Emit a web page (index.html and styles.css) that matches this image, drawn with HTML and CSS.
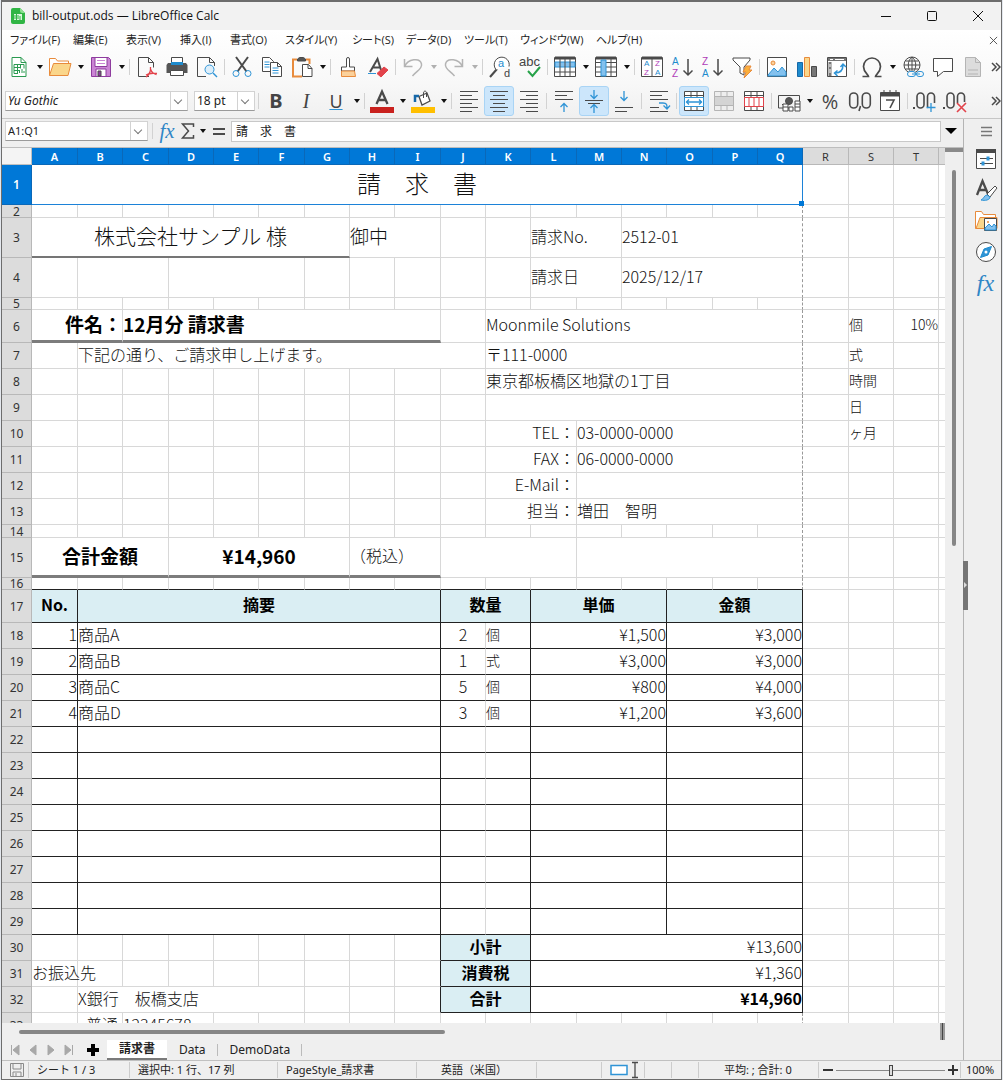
FILE: index.html
```html
<!DOCTYPE html>
<html lang="ja">
<head>
<meta charset="utf-8">
<title>bill-output.ods — LibreOffice Calc</title>
<meta name="viewport" content="width=device-width, initial-scale=1">
<link rel="stylesheet" href="styles.css">
</head>
<body>
<div class="window">
<header class="titlebar">
  <svg class="app-icon" viewBox="0 0 16 18"><path d="M3 1h7l5 5v9a2 2 0 0 1-2 2H3a2 2 0 0 1-2-2V3a2 2 0 0 1 2-2z" fill="#30b544"/><path d="M10 1l5 5h-3a2 2 0 0 1-2-2z" fill="#8be08f"/><path d="M4 7h8v6H4z" fill="#d9f5dc"/><path d="M4 9h5M4 11h5M6.500 7v6M10 9v4" stroke="#30b544"/></svg>
  <h1 class="title">bill-output.ods — LibreOffice Calc</h1>
  <div class="win-buttons">
    <button aria-label="最小化"><svg viewBox="0 0 12 12"><path d="M1 6.500h10"/></svg></button>
    <button aria-label="最大化"><svg viewBox="0 0 12 12"><rect x="1.500" y="1.500" width="9" height="9" rx="1"/></svg></button>
    <button aria-label="閉じる"><svg viewBox="0 0 12 12"><path d="M1 1l10 10M11 1L1 11"/></svg></button>
  </div>
</header>

<div class="chrome">
<nav class="menubar">
  <button>ファイル(F)</button><button>編集(E)</button><button>表示(V)</button><button>挿入(I)</button><button>書式(O)</button><button>スタイル(Y)</button><button>シート(S)</button><button>データ(D)</button><button>ツール(T)</button><button>ウィンドウ(W)</button><button>ヘルプ(H)</button>
  <button class="doc-close" aria-label="文書を閉じる"><svg viewBox="0 0 10 10"><path d="M1 1l8 8M9 1L1 9"/></svg></button>
</nav>

<div class="toolbar">
  <button class="tool" aria-label="新規"><svg viewBox="0 0 24 24"><path class="g" d="M5 2.500h9l5 5v14H5z" fill="#fff"/><path class="g" d="M14 2.500v5h5M7 9.500h10M7 12.500h6M7 15.500h6M7 18.500h4M7 9.500v9M10.500 9.500v9M13.500 9.500v4M17 9.500v4M12.500 18v-3M15 18v-4M17 18v-2"/></svg></button><button class="arrow" aria-label="新規メニュー"></button>
  <button class="tool" aria-label="開く"><svg viewBox="0 0 24 24"><path d="M1.500 20.500v-17h6l2 2.500h11v4" fill="#fff" stroke="#e88b3c"/><path d="M1.500 20.500l4-12h17.500l-3 12z" fill="#fad68b" stroke="#e88b3c"/></svg></button><button class="arrow" aria-label="開くメニュー"></button>
  <button class="tool" aria-label="保存"><svg viewBox="0 0 24 24"><path d="M2.500 2.500h17l2 2v17h-19z" fill="#ca84d4" stroke="#8e3c9e"/><path d="M6 2.500h12v9H6zM7 14h10v7.500H7z" fill="#fff" stroke="#8e3c9e"/><path d="M9 16h3v5H9z" fill="#8e3c9e"/><path d="M8 5.500h8M8 8.500h8" stroke="#ca84d4"/></svg></button><button class="arrow" aria-label="保存メニュー"></button>
  <span class="sep"></span>
  <button class="tool" aria-label="PDF"><svg viewBox="0 0 24 24"><path d="M14 21.500H3.500v-19h10l5 5v5M13.500 2.500v5h5"/><path d="M11 22c3-2 5-5 4.500-10M15.500 14c1 3 3 5 6 5.500M11 20c3-2 7-2 11-1.500" stroke="#e2434b" stroke-width="1.300"/></svg></button>
  <button class="tool" aria-label="印刷"><svg viewBox="0 0 24 24"><path d="M6.500 8V2.500h11V8" fill="#fff"/><path d="M3 8h18l1.500 2v8h-21v-8z" fill="#555" stroke="none"/><path d="M6 7h12v3H6z" fill="#1e8bcd" stroke="none"/><path d="M5.500 15.500h13v5h-13z" fill="#fff"/></svg></button>
  <button class="tool" aria-label="印刷プレビュー"><svg viewBox="0 0 24 24"><path d="M11 21.500H2.500v-19h12l5 5V11M14.500 2.500v5h5"/><circle cx="14.500" cy="14.500" r="4.500" fill="#dceefa" stroke="#2f94d6"/><path d="M18 18l4 4" stroke="#2f94d6" stroke-width="1.500"/></svg></button>
  <span class="sep"></span>
  <button class="tool" aria-label="切り取り"><svg viewBox="0 0 24 24"><path d="M6 2l10.500 14.500M18 2L7.500 16.500" stroke-width="2"/><circle cx="6" cy="18.500" r="3" stroke="#2f94d6"/><circle cx="18" cy="18.500" r="3" stroke="#2f94d6"/></svg></button>
  <button class="tool" aria-label="コピー"><svg viewBox="0 0 24 24"><path d="M2.500 2.500h7l4 4v10h-11z" fill="#fff"/><path d="M4.500 7h5M4.500 9.500h5M4.500 12h5" stroke="#2f94d6"/><path d="M10.500 7.500h7l4 4v10h-11z" fill="#fff"/><path d="M17.500 7.500v4h4"/><path d="M12.500 13h6M12.500 15.500h6M12.500 18h6" stroke="#2f94d6"/></svg></button>
  <button class="tool" aria-label="貼り付け"><svg viewBox="0 0 24 24"><path d="M7 4.500H3v17h9M16 4.500h3.500V9" stroke="#e88b3c" stroke-width="2"/><path d="M7.500 6V4l2-1.500h4L15.500 4v2z" fill="#555"/><path d="M12.500 9.500h6l3.500 4v8h-9.500z" fill="#fff"/><path d="M18 9.500v4h4"/></svg></button><button class="arrow" aria-label="貼り付けメニュー"></button>
  <span class="sep"></span>
  <button class="tool" aria-label="書式の複写"><svg viewBox="0 0 24 24"><path d="M10.500 12V4a1.500 1.500 0 0 1 3 0v8h5v4h-13v-4z" fill="#fff"/><path d="M5.500 16h13l1 5.500H5.500z" fill="#fbd19b" stroke="#e88b3c"/></svg></button>
  <button class="tool" aria-label="書式のクリア"><svg viewBox="0 0 24 24"><path d="M4 17L11.500 4 15 15M7 12.500h7" stroke-width="2"/><path d="M2 18.500h8" stroke="#2f94d6"/><path d="M18 12l4 3-7 7-4-3.500z" fill="#e2434b" stroke="#e2434b"/></svg></button>
  <span class="sep"></span>
  <button class="tool dim" aria-label="元に戻す"><svg viewBox="0 0 24 24"><path d="M3.500 4v7.500h8M3.500 11.500C7 4 19 2 20.500 9c1 5-5 7-9 12" stroke-width="1.500"/></svg></button><button class="arrow dim" aria-label="元に戻す履歴"></button>
  <button class="tool dim" aria-label="やり直し"><svg viewBox="0 0 24 24"><path d="M20.500 4v7.500h-8M20.500 11.500C17 4 5 2 3.500 9c-1 5 5 7 9 12" stroke-width="1.500"/></svg></button><button class="arrow dim" aria-label="やり直し履歴"></button>
  <span class="sep"></span>
  <button class="tool" aria-label="検索と置換"><svg viewBox="0 0 24 24"><path d="M9 14l-7 8" stroke-width="2"/><path d="M8 14.500a7.500 7.500 0 1 1 13-3" fill="#fff"/><text x="10" y="12" class="ic b" font-size="11">a</text><text x="16" y="22" class="ic" font-size="11">d</text></svg></button>
  <button class="tool" aria-label="スペルチェック"><svg viewBox="0 0 24 24"><text x="1" y="11" class="ic" font-size="13">abc</text><path d="M10 16l4.500 5L22 12" stroke="#27a34a" stroke-width="2"/></svg></button>
  <span class="sep"></span>
  <button class="tool" aria-label="行"><svg viewBox="0 0 24 24"><path d="M1.500 2.500h21v19h-21z" fill="#fff"/><path d="M2 7h20v5H2z" fill="#83c1ee" stroke="#2f94d6"/><path d="M2 3h20" stroke-width="3"/><path d="M2 17h20M7 3v18M12 3v18M17 3v18"/></svg></button><button class="arrow" aria-label="行メニュー"></button>
  <button class="tool" aria-label="列"><svg viewBox="0 0 24 24"><path d="M1.500 2.500h21v19h-21z" fill="#fff"/><path d="M2 3h20" stroke-width="3"/><path d="M2 7.500h20M2 12h20M2 17h20M17 3v18"/><path d="M7 5h5v16H7z" fill="#83c1ee" stroke="#2f94d6"/></svg></button><button class="arrow" aria-label="列メニュー"></button>
  <span class="sep"></span>
  <button class="tool" aria-label="並べ替え"><svg viewBox="0 0 24 24"><path d="M1.500 2.500h21v19h-21z" fill="#fff"/><path d="M2 3h20" stroke-width="3"/><path d="M12 3v18"/><text x="4" y="11" class="ic b" font-size="8">A</text><text x="4" y="20" class="ic p" font-size="8">Z</text><text x="15" y="11" class="ic p" font-size="8">Z</text><text x="15" y="20" class="ic b" font-size="8">A</text></svg></button>
  <button class="tool" aria-label="昇順"><svg viewBox="0 0 24 24"><text x="2" y="10" class="ic b" font-size="10">A</text><text x="2" y="22" class="ic p" font-size="10">Z</text><path d="M18 4v16M13.500 15.500L18 20l4.500-4.500" stroke-width="1.500"/></svg></button>
  <button class="tool" aria-label="降順"><svg viewBox="0 0 24 24"><text x="2" y="10" class="ic p" font-size="10">Z</text><text x="2" y="22" class="ic b" font-size="10">A</text><path d="M18 4v16M13.500 15.500L18 20l4.500-4.500" stroke-width="1.500"/></svg></button>
  <button class="tool" aria-label="オートフィルター"><svg viewBox="0 0 24 24"><path d="M3 3h17v2l-6 7v8l-4-2v-6L3 5z" fill="#fff"/><path d="M16 11h5l-2 4h3l-8 8 2-6h-3z" fill="#fbb03b" stroke="#e88b3c"/></svg></button>
  <span class="sep"></span>
  <button class="tool" aria-label="画像"><svg viewBox="0 0 24 24"><path d="M2.500 2.500h19v19h-19z" fill="#fff"/><path d="M3 20l6-7 4 4 4-5 4 5v4H3z" fill="#83c1ee" stroke="#2f94d6"/><circle cx="8" cy="8" r="2" fill="#fbd19b" stroke="#e88b3c"/></svg></button>
  <button class="tool" aria-label="グラフ"><svg viewBox="0 0 24 24"><path d="M2.500 7.500h5v14h-5z" fill="#1e8bcd" stroke="#1668a8"/><path d="M9.500 2.500h5v19h-5z" fill="#fad68b" stroke="#e88b3c"/><path d="M16.500 11.500h5v10h-5z" fill="#777"/></svg></button>
  <button class="tool" aria-label="ピボットテーブル"><svg viewBox="0 0 24 24"><path d="M2.500 2.500h19v19h-19z" fill="#fff"/><path d="M3 4.500h18" stroke-width="3" stroke="#777"/><path d="M5 7v14" stroke-width="3" stroke="#777"/><path d="M5 4.500h3M10 4.500h9M5 9v3M5 14v4" stroke="#fff"/><path d="M10 18c6 0 8-3 8-8M15.500 12l2.500-3 3 3M12.500 15.500L9.500 18l3 3" stroke="#2f94d6" stroke-width="1.500"/></svg></button>
  <span class="sep"></span>
  <button class="tool" aria-label="特殊文字"><svg viewBox="0 0 24 24"><path d="M2.500 21.500h6c0-2-5-4-5-10a8.500 8.500 0 0 1 17 0c0 6-5 8-5 10h6" stroke-width="1.700"/></svg></button><button class="arrow" aria-label="特殊文字メニュー"></button>
  <button class="tool" aria-label="ハイパーリンク"><svg viewBox="0 0 24 24"><circle cx="11" cy="10" r="8"/><path d="M3 10h16M4.500 6h13M4.500 14h13M11 2v14M11 2c-5 4-5 12 0 16M11 2c5 4 5 12 0 16"/><rect x="6.500" y="16.500" width="8" height="5" rx="2.500" fill="#f8f8f8" stroke="#2f94d6"/><rect x="15.500" y="16.500" width="7" height="5" rx="2.500" fill="#f8f8f8" stroke="#2f94d6"/><path d="M11 19h8" stroke="#2f94d6"/></svg></button>
  <button class="tool" aria-label="コメント"><svg viewBox="0 0 24 24"><path d="M2.500 3.500h19v13h-9l-6 5v-5h-4z" fill="#fff"/></svg></button>
  <button class="tool dim" aria-label="ヘッダーとフッター"><svg viewBox="0 0 24 24"><path d="M4.500 2.500h10l5 5v14h-15z" fill="#dcdcdc"/><path d="M14.500 2.500v5h5M7 15h10M7 19h10"/></svg></button>
  <button class="more" aria-label="その他"><svg viewBox="0 0 10 12"><path d="M1 2l4 4-4 4M5 2l4 4-4 4"/></svg></button>
</div>

<div class="toolbar format">
  <span class="combo font-combo"><select aria-label="フォント名"><option>Yu Gothic</option></select></span>
  <span class="combo size-combo"><select aria-label="フォントサイズ"><option>18 pt</option></select></span>
  <span class="sep"></span>
  <button class="tool bold">B</button><button class="tool ital">I</button><button class="tool under"><u>U</u></button><button class="arrow" aria-label="下線メニュー"></button>
  <span class="sep"></span>
  <button class="tool" aria-label="文字の色"><svg viewBox="0 0 24 24"><path d="M6.500 15L12 2.500 17.500 15M8.500 11h7" stroke-width="2.300"/><path d="M0 18h24v6H0z" fill="#c9211e" stroke="none"/></svg></button><button class="arrow" aria-label="文字の色メニュー"></button>
  <button class="tool" aria-label="背景色"><svg viewBox="0 0 24 24"><path d="M8 7.500l8-3.500 3 8-8 4z" fill="#fff" stroke-width="1.300"/><path d="M12.500 9V4c0-2.500 3-2.500 3 0v4"/><path d="M4 13V7h4" stroke="#1668a8" stroke-width="2.500"/><path d="M0 18h24v6H0z" fill="#ffbf00" stroke="none"/></svg></button><button class="arrow" aria-label="背景色メニュー"></button>
  <span class="sep"></span>
  <button class="tool" aria-label="左揃え"><svg viewBox="0 0 24 24"><path class="w" d="M3 2.500h18M3 6.500h12M3 10.500h18M3 14.500h12M3 18.500h18M3 22.500h12"/></svg></button>
  <button class="tool on" aria-label="中央揃え"><svg viewBox="0 0 24 24"><path class="w" d="M3 2.500h18M6 6.500h12M3 10.500h18M6 14.500h12M3 18.500h18M6 22.500h12"/></svg></button>
  <button class="tool" aria-label="右揃え"><svg viewBox="0 0 24 24"><path class="w" d="M3 2.500h18M9 6.500h12M3 10.500h18M9 14.500h12M3 18.500h18M9 22.500h12"/></svg></button>
  <span class="sep"></span>
  <button class="tool" aria-label="上揃え"><svg viewBox="0 0 24 24"><path class="w" d="M3 2.500h18M3 6.500h12M3 10.500h18"/><path class="a" d="M12 23v-8M8.500 18l3.500-3.500 3.500 3.500"/></svg></button>
  <button class="tool on" aria-label="上下中央揃え"><svg viewBox="0 0 24 24"><path class="w" d="M3 11.500h18M6 14.500h12"/><path class="a" d="M12 1v8M8.500 6L12 9.500 15.500 6M12 24v-8M8.500 19l3.500-3.500 3.500 3.500"/></svg></button>
  <button class="tool" aria-label="下揃え"><svg viewBox="0 0 24 24"><path class="w" d="M3 18.500h18M3 22.500h12"/><path class="a" d="M12 2v9M8.500 8l3.500 3.500L15.500 8"/></svg></button>
  <span class="sep"></span>
  <button class="tool" aria-label="折り返し"><svg viewBox="0 0 24 24"><path class="w" d="M3 2.500h18M3 6.500h12M3 10.500h18M3 18.500h9M3 22.500h18"/><path class="a" d="M12 14h4c4 0 4 2 4 5M16.500 16.500l3.500 3.500 3-3.500"/></svg></button>
  <span class="sep"></span>
  <button class="tool on" aria-label="セルの結合"><svg viewBox="0 0 24 24"><path d="M2.500 2.500h19v19h-19z" fill="#fff"/><path d="M2.500 6.500h19M9 2v20M15 2v20"/><path d="M2.500 8.500h19v9h-19z" fill="#fff" stroke="#2f94d6"/><path class="a" d="M4 13h16M7 10.500L4.500 13 7 15.500M17 10.500l2.500 2.500-2.500 2.500"/></svg></button>
  <button class="tool dim" aria-label="中央に結合"><svg viewBox="0 0 24 24"><path d="M2.500 2.500h19v19h-19z" fill="#eee"/><path d="M2.500 7.500h19v9h-19zM9 2v6M15 2v6M9 17v5M15 17v5" fill="#d4d4d4"/></svg></button>
  <button class="tool" aria-label="結合の解除"><svg viewBox="0 0 24 24"><path d="M2.500 2.500h19v19h-19z" fill="#fff"/><path d="M2.500 6.500h19M9 2v20M15 2v20"/><path d="M2.500 8.500h19v9h-19zM7 9v9M12 9v9M17 9v9" fill="#fff" stroke="#e2434b"/></svg></button>
  <span class="sep"></span>
  <button class="tool" aria-label="通貨"><svg viewBox="0 0 24 24"><path d="M12 19H1.500V6.500h21V13M5 15.500h4"/><circle cx="12" cy="12" r="3.500" fill="#555"/><path d="M6 15h5v7H6zM12 18h4v4h-4zM18 12h5v10h-5z" fill="#fff"/><path d="M6 18h5M18 15h5M18 18h5"/></svg></button><button class="arrow" aria-label="通貨メニュー"></button>
  <button class="tool num">%</button>
  <button class="tool num" aria-label="数値"><svg viewBox="0 0 24 24"><rect x="1.700" y="4" width="8" height="15" rx="4" stroke-width="1.600"/><rect x="14.300" y="4" width="8" height="15" rx="4" stroke-width="1.600"/><path d="M12.500 17l-1.500 5" stroke-width="1.600"/></svg></button>
  <button class="tool" aria-label="日付"><svg viewBox="0 0 24 24"><path d="M2.500 3.500h19v18h-19z" fill="#fff"/><path d="M2.500 5.500h19" stroke-width="4"/><path d="M6 1v4M12 1v4M18 1v4"/><path d="M8 11h8l-4 8" stroke-width="1.600"/></svg></button>
  <span class="sep"></span>
  <button class="tool" aria-label="小数点以下の桁数を増やす"><svg viewBox="0 0 24 24"><rect x="4" y="4" width="7" height="15" rx="3.500" stroke-width="1.600"/><path d="M15 19a6 6 0 0 1-.5-3V7.500a3.500 3.500 0 0 1 7 0V14" stroke-width="1.600"/><path d="M1 18v2" stroke-width="2"/><path class="a" d="M18 14v9M13.500 18.500h9"/></svg></button>
  <button class="tool" aria-label="小数点以下の桁数を減らす"><svg viewBox="0 0 24 24"><rect x="4" y="4" width="7" height="15" rx="3.500" stroke-width="1.600"/><path d="M14.500 14V7.500a3.500 3.500 0 0 1 7 0V13" stroke-width="1.600"/><path d="M1 18v2" stroke-width="2"/><path d="M14 14l9 9M23 14l-9 9" stroke="#e2434b" stroke-width="1.600"/></svg></button>
  <button class="more" aria-label="その他"><svg viewBox="0 0 10 12"><path d="M1 2l4 4-4 4M5 2l4 4-4 4"/></svg></button>
</div>
</div>

<div class="main">
<main class="work">
  <div class="formula-bar">
    <span class="combo name-box"><input aria-label="名前ボックス" value="A1:Q1"></span>
    <span class="sep"></span>
    <button class="fx" aria-label="関数ウィザード"><i>fx</i></button>
    <button class="sigma" aria-label="合計"><svg viewBox="0 0 14 18"><path d="M12.500 5V2h-11l6 7-6 7h11v-3" stroke-width="1.500"/></svg></button>
    <button class="arrow" aria-label="合計メニュー"></button>
    <button class="equal" aria-label="数式"><svg viewBox="0 0 14 12"><path d="M1 4h12M1 9h12" stroke-width="2"/></svg></button>
    <input class="formula" aria-label="数式入力" value="請　求　書">
    <button class="expand" aria-label="展開"></button>
  </div>
  <div class="sheet-area">
  <div class="viewport">
  <table class="sheet">
    <colgroup><col class="rh"><col class="w"><col class="n"><col class="w"><col class="n"><col class="n"><col class="w"><col class="n"><col class="n"><col class="w"><col class="n"><col class="n"><col class="w"><col class="n"><col class="n"><col class="w"><col class="n"><col class="n"><col class="w"><col class="n"><col class="n"><col></colgroup>
    <thead><tr class="cols"><td class="corner"><th class="s">A<th class="s">B<th class="s">C<th class="s">D<th class="s">E<th class="s">F<th class="s">G<th class="s">H<th class="s">I<th class="s">J<th class="s">K<th class="s">L<th class="s">M<th class="s">N<th class="s">O<th class="s">P<th class="s">Q<th>R<th>S<th>T<th></tr></thead>
    <tbody>
    <tr class="tall"><th class="s">1<td class="title-cell" colspan="17">請　求　書<span class="handle"></span><td><td><td><td></tr>
    <tr class="short"><th>2<td><td><td><td><td><td><td><td><td><td><td><td><td><td><td><td><td class="pg"><td><td><td><td></tr>
    <tr class="tall"><th>3<td class="client" colspan="7">株式会社サンプル 様<td class="big" colspan="2">御中<td><td><td colspan="2">請求No.<td class="pg" colspan="4">2512-01<td><td><td><td></tr>
    <tr class="tall"><th>4<td><td colspan="2"><td colspan="3"><td><td><td><td><td><td colspan="2">請求日<td class="pg" colspan="4">2025/12/17<td><td><td><td></tr>
    <tr class="tiny"><th>5<td><td><td><td><td><td><td><td><td><td><td><td><td><td><td><td><td class="pg"><td><td><td><td></tr>
    <tr class="mid"><th>6<td class="big b r thick" colspan="2">件名：<td class="big b thick" colspan="7">12月分 請求書<td><td class="pg" colspan="7">Moonmile Solutions<td><td class="unit">個<td class="rate">10%<td></tr>
    <tr><th>7<td><td colspan="9">下記の通り、ご請求申し上げます。<td class="pg" colspan="7">〒111-0000<td><td class="unit">式<td><td></tr>
    <tr><th>8<td><td><td><td><td><td><td><td><td><td><td class="pg" colspan="7">東京都板橋区地獄の1丁目<td><td class="unit">時間<td><td></tr>
    <tr><th>9<td><td><td><td><td><td><td><td><td><td><td class="pg" colspan="7"><td><td class="unit">日<td><td></tr>
    <tr><th>10<td><td><td><td><td><td><td><td><td><td><td class="r" colspan="2">TEL：<td class="pg" colspan="5">03-0000-0000<td><td class="unit">ヶ月<td><td></tr>
    <tr><th>11<td><td><td><td><td><td><td><td><td><td><td class="r" colspan="2">FAX：<td class="pg" colspan="5">06-0000-0000<td><td><td><td></tr>
    <tr><th>12<td><td><td><td><td><td><td><td><td><td><td class="r" colspan="2">E-Mail：<td class="pg" colspan="5"><td><td><td><td></tr>
    <tr><th>13<td><td><td><td><td><td><td><td><td><td><td class="r" colspan="2">担当：<td class="pg" colspan="5">増田　智明<td><td><td><td></tr>
    <tr class="short"><th>14<td><td><td><td><td><td><td><td><td><td><td><td><td><td><td><td><td class="pg"><td><td><td><td></tr>
    <tr class="tall"><th>15<td class="big b c thick" colspan="3">合計金額<td class="big b c thick" colspan="4">¥14,960<td class="thick tax" colspan="2">（税込）<td colspan="3"><td class="pg" colspan="5"><td><td><td><td></tr>
    <tr class="tiny over"><th>16<td><td><td><td><td><td><td><td><td><td><td><td><td><td><td><td><td class="pg"><td><td><td><td></tr>
    <tr class="mid head"><th>17<td>No.<td colspan="8">摘要<td colspan="2">数量<td colspan="3">単価<td colspan="3">金額<td><td><td><td></tr>
    <tr class="item"><th>18<td>1<td colspan="8">商品A<td>2<td>個<td colspan="3">¥1,500<td colspan="3">¥3,000<td><td><td><td></tr>
    <tr class="item"><th>19<td>2<td colspan="8">商品B<td>1<td>式<td colspan="3">¥3,000<td colspan="3">¥3,000<td><td><td><td></tr>
    <tr class="item"><th>20<td>3<td colspan="8">商品C<td>5<td>個<td colspan="3">¥800<td colspan="3">¥4,000<td><td><td><td></tr>
    <tr class="item"><th>21<td>4<td colspan="8">商品D<td>3<td>個<td colspan="3">¥1,200<td colspan="3">¥3,600<td><td><td><td></tr>
    <tr class="item"><th>22<td><td colspan="8"><td><td><td colspan="3"><td colspan="3"><td><td><td><td></tr>
    <tr class="item"><th>23<td><td colspan="8"><td><td><td colspan="3"><td colspan="3"><td><td><td><td></tr>
    <tr class="item"><th>24<td><td colspan="8"><td><td><td colspan="3"><td colspan="3"><td><td><td><td></tr>
    <tr class="item"><th>25<td><td colspan="8"><td><td><td colspan="3"><td colspan="3"><td><td><td><td></tr>
    <tr class="item"><th>26<td><td colspan="8"><td><td><td colspan="3"><td colspan="3"><td><td><td><td></tr>
    <tr class="item"><th>27<td><td colspan="8"><td><td><td colspan="3"><td colspan="3"><td><td><td><td></tr>
    <tr class="item"><th>28<td><td colspan="8"><td><td><td colspan="3"><td colspan="3"><td><td><td><td></tr>
    <tr class="item"><th>29<td><td colspan="8"><td><td><td colspan="3"><td colspan="3"><td><td><td><td></tr>
    <tr><th>30<td><td><td><td><td><td><td><td><td class="edge"><td class="sum" colspan="2">小計<td class="amount" colspan="6">¥13,600<td><td><td><td></tr>
    <tr><th>31<td class="spill">お振込先<td><td><td><td><td><td><td><td class="edge"><td class="sum" colspan="2">消費税<td class="amount" colspan="6">¥1,360<td><td><td><td></tr>
    <tr><th>32<td><td colspan="5">X銀行　板橋支店<td><td><td class="edge"><td class="sum" colspan="2">合計<td class="amount b" colspan="6">¥14,960<td><td><td><td></tr>
    <tr><th>33<td><td class="kind">普通<td colspan="2">12345678<td><td><td><td><td><td><td><td><td><td><td><td><td class="pg"><td><td><td><td></tr>
    </tbody>
  </table>
  </div>
  <div class="vscroll"><span class="split"></span><span class="vthumb"></span></div>
  </div>
  <div class="hscroll"><span class="hthumb"></span><span class="hsplit"></span></div>
  <div class="tabs">
    <button aria-label="先頭のシート"><svg viewBox="0 0 12 12"><path d="M2.500 1v10"/><path d="M10 1v10L4 6z"/></svg></button>
    <button aria-label="前のシート"><svg viewBox="0 0 12 12"><path d="M9 1v10L3 6z"/></svg></button>
    <button aria-label="次のシート"><svg viewBox="0 0 12 12"><path d="M3 1v10l6-5z"/></svg></button>
    <button aria-label="最後のシート"><svg viewBox="0 0 12 12"><path d="M2 1v10l6-5zM9.500 1v10"/></svg></button>
    <button class="add" aria-label="シートを追加"><svg viewBox="0 0 14 14"><path d="M7 1v12M1 7h12"/></svg></button>
    <button class="tab active">請求書</button><button class="tab">Data</button><button class="tab">DemoData</button>
  </div>
</main>
<aside class="sidebar">
  <button aria-label="サイドバー設定"><svg viewBox="0 0 24 24"><path d="M7 8.500h11M7 12.500h11M7 16.500h11" stroke="#777" stroke-width="1.500"/></svg></button>
  <button aria-label="プロパティ"><svg viewBox="0 0 24 24"><path d="M2.500 2.500h19v19h-19z" fill="#fff"/><path d="M2 4h20" stroke-width="4"/><path d="M6 11.500h13M6 16.500h13"/><path d="M14 9.500v4M9 14.500v4" stroke="#2f94d6" stroke-width="3"/></svg></button>
  <button aria-label="スタイル"><svg viewBox="0 0 24 24"><path d="M3 17L8.500 3 14 16M5.500 12h7" stroke-width="2.300"/><path d="M13 16l8-8 2 2-7 9z" fill="#fff"/><path d="M13 17c-3 0-3 4-6 5 4 1 9 0 9-3z" fill="#83c1ee" stroke="#2f94d6"/></svg></button>
  <button aria-label="ギャラリー"><svg viewBox="0 0 24 24"><path d="M1.500 19.500v-17h6l2 3h12v4M1.500 19.500h7" fill="#fff" stroke="#e88b3c"/><path d="M2 19.500l4-11h17v11z" fill="#fad68b" stroke="#e88b3c"/><path d="M10.500 9.500h12v12h-12z" fill="#fff"/><path d="M11 19l4-4 3 3 2-3 2 2v4H11z" fill="#83c1ee" stroke="#2f94d6"/><circle cx="14" cy="13" r="1" fill="#e88b3c" stroke="none"/></svg></button>
  <button aria-label="ナビゲーター"><svg viewBox="0 0 24 24"><circle cx="12" cy="12" r="9.500" fill="#fff"/><path d="M17.500 6.500L14 15l-7.500 2.500L10 9z" fill="#2f94d6" stroke="#1e8bcd"/><circle cx="12" cy="12" r="1.500" fill="#fff" stroke="none"/></svg></button>
  <button class="fx" aria-label="関数"><i>fx</i></button>
  <span class="grip"></span>
</aside>
</div>

<footer class="status">
  <span class="st-save"><svg viewBox="0 0 16 16"><path d="M1.500 1.500h13v13h-13zM4 2v5h8V2M4 14.500V10h8v4.500M7 11v3"/></svg></span>
  <span>シート 1 / 3</span><span>選択中: 1 行、17 列</span><span>PageStyle_請求書</span><span class="lang">英語（米国）</span><span></span>
  <span class="mode"><svg viewBox="0 0 32 16"><rect x="1" y="3.500" width="16" height="9" fill="#fff" stroke="#2f94d6" stroke-width="1.500"/><path d="M22 .5h6M25 0v16M22 15.500h6" stroke-width="1.300"/></svg></span>
  <span></span><span></span><span class="calc">平均: ; 合計: 0</span>
  <span class="zoom"><button aria-label="縮小"><svg viewBox="0 0 10 10"><path d="M0 5h10"/></svg></button><input type="range" min="0" max="100" value="50" aria-label="ズーム"><button aria-label="拡大"><svg viewBox="0 0 10 10"><path d="M0 5h10M5 0v10"/></svg></button></span>
  <span class="pct">100%</span>
</footer>
</div>
</body>
</html>
```
FILE: styles.css
```css
* { box-sizing: border-box; }
body {
  margin: 0;
  background: #e4e8ee;
  color: #222;
  font: 12px/16px "Noto Sans", "Noto Sans CJK JP", sans-serif;
}
button, input, select { font: inherit; color: inherit; }
button { border: 0; padding: 0; background: none; }
svg { display: block; fill: none; stroke: #4a4a4a; overflow: visible; }
.window {
  display: flex;
  flex-direction: column;
  height: 100vh;
  margin: 0 1px;
  border: 1px solid #6d6d6d;
  border-top-width: 2px;
  background: #efefef;
  overflow: hidden;
}

/* title bar */
.titlebar { display: flex; align-items: center; flex: 0 0 28px; background: #f2f2f2; padding-left: 8px; }
.app-icon { width: 16px; height: 18px; stroke: none; }
.title { margin: 0 auto 0 6px; font-size: 12px; font-weight: 400; color: #111; font-family: "Open Sans", "Noto Sans", sans-serif; }
.win-buttons { display: flex; }
.win-buttons button { width: 46px; height: 28px; display: grid; place-items: center; }
.win-buttons svg { width: 12px; height: 12px; stroke: #111; }

/* menus and toolbars */
.chrome { background: linear-gradient(#fff, #f8f8f8 60%, #f0f0f0); border-bottom: 1px solid #c6c6c6; }
.menubar {
  display: grid;
  grid-template-columns: 63px 53px 54px 50px 55px 67px 54px 58px 56px 76px 60px 1fr;
  height: 20px;
  padding-left: 8px;
  font-family: "Open Sans", "Noto Sans CJK JP", sans-serif;
  font-size: 11px;
  font-feature-settings: "palt";
  white-space: nowrap;
}
.menubar button { text-align: left; }
.menubar .doc-close { justify-self: end; margin-right: 3px; }
.doc-close svg { width: 9px; height: 9px; }
.toolbar { display: flex; align-items: center; height: 34px; padding-left: 2px; }
.tool { flex: 0 0 30px; height: 30px; display: grid; place-items: center; color: #444; }
.tool svg { width: 24px; height: 24px; }
.tool.on { background: #cce6fb; border: 1px solid #a9d4f5; border-radius: 3px; }
.tool.dim svg { stroke: #b4b4b4; }
.g { stroke: #2a9a50; }
.w { stroke-width: 1; }
.a { stroke: #2f94d6; stroke-width: 1.300; }
.ic { font-family: "Liberation Sans", sans-serif; fill: #444; stroke: none; }
.ic.b { fill: #1e8bcd; }
.ic.p { fill: #b03cb8; }
.arrow { flex: 0 0 11px; height: 24px; display: grid; place-items: center; }
.arrow::before { content: ""; border: 3px solid transparent; border-top: 4px solid #111; border-bottom: 0; }
.arrow.dim::before { border-top-color: #b0b0b0; }
.sep { flex: 0 0 5px; height: 16px; background: linear-gradient(90deg, transparent 2px, #d2d2d2 2px 3px, transparent 3px); }
.more { margin-left: auto; flex: 0 0 10px; }
.more svg { width: 10px; height: 12px; stroke-width: 1.500; }
.bold { font-size: 20px; font-weight: 700; }
.ital { font: italic 20px "Liberation Serif", serif; }
.under { font-size: 18px; }
.under u { text-decoration-color: #2f94d6; }
.num { font: 20px "Open Sans", sans-serif; }
.combo { position: relative; height: 20px; background: #fff; border: 1px solid #d2d2d2; border-bottom-color: #9a9a9a; display: flex; }
.combo::before { content: ""; position: absolute; right: 16px; top: 0; bottom: 0; width: 1px; background: #d2d2d2; }
.combo::after { content: ""; position: absolute; right: 6px; top: 5px; width: 5px; height: 5px; border: solid #777; border-width: 0 1px 1px 0; transform: rotate(45deg); }
.combo select, .combo input { appearance: none; border: 0; background: none; width: 100%; padding: 0 0 0 2px; outline: 0; }
.font-combo { flex: 0 0 183px; margin: 0 6px 0 1px; font-style: italic; }
.size-combo { flex: 0 0 61px; margin-right: 1px; }

/* work area */
.main { display: grid; grid-template-columns: minmax(0, 1fr) 38px; flex: 1; min-height: 0; }
.work { display: flex; flex-direction: column; min-height: 0; }
.formula-bar { display: flex; align-items: center; flex: 0 0 28px; padding: 0 3px 4px; border-bottom: 1px solid #bdbdbd; }
.name-box { flex: 0 0 143px; margin-right: 2px; }
.name-box input { font-size: 11px; }
.fx { flex: 0 0 24px; color: #2f86c6; font: 21px/20px "Liberation Serif", serif; }
.sigma { flex: 0 0 18px; }
.sigma svg { width: 14px; height: 18px; margin: auto; }
.equal { flex: 0 0 22px; margin-right: 1px; }
.equal svg { width: 14px; height: 12px; margin: auto; }
.formula { flex: 1; min-width: 0; height: 21px; border: 1px solid #c8c8c8; padding: 0 4px; outline: 0; background: #fff; }
.expand { flex: 0 0 19px; height: 20px; display: grid; place-items: center; }
.expand::before { content: ""; border: 6px solid transparent; border-top-color: #000; border-bottom: 0; }

.sheet-area { display: flex; flex: 1; min-height: 0; }
.viewport { flex: 1; min-width: 0; overflow: hidden; background: #fff; }
.sheet { table-layout: fixed; width: 100%; border-collapse: separate; border-spacing: 0; font: 300 16px/20px "Noto Sans CJK JP", sans-serif; color: #111; white-space: nowrap; }
.rh { width: 30px; }
.n { width: 45px; }
.w { width: 46px; }
.sheet tr { height: 26px; }
.sheet .cols { height: 17px; }
.sheet .tall { height: 40px; }
.sheet .mid { height: 33px; }
.sheet .short { height: 13px; }
.sheet .tiny { height: 12px; }
.sheet td { padding: 0 0 4px; border: solid #d8d8d8; border-width: 0 1px 1px 0; }
.sheet th { padding: 0; background: #dcdcdc; border: solid #b8b8b8; border-width: 0 1px 1px 0; font: 400 12px/11px "Noto Sans", sans-serif; color: #333; }
.sheet .cols th { font-size: 11px; }
.sheet th.s { background: #0078d7; border-color: #0a68b8; color: #fff; font-weight: 600; }
.sheet .corner { background: #f4f4f4; border-color: #c0c0c0; }
.sheet tr > :last-child { border-right: 0; }
.sheet .title-cell { position: relative; text-align: center; font-size: 24px; line-height: 32px; border-color: #1c82d8; }
.handle { position: absolute; right: -2px; bottom: -2px; width: 5px; height: 5px; background: #0078d7; }
.sheet .client { text-align: center; font-size: 21px; line-height: 28px; border-bottom: 2px solid #757575; }
.sheet .big { font-size: 19px; line-height: 26px; }
.sheet .b { font-weight: 700; color: #000; }
.sheet .big.b { padding-bottom: 2px; }
.sheet .r { text-align: right; padding-right: 1px; }
.sheet .big.r { padding-right: 0; }
.sheet .kind { text-align: right; padding-right: 4px; }
.sheet .c { text-align: center; }
.sheet .thick { border-bottom: 3px solid #7c7c7c; }
.sheet .unit { font-size: 14px; }
.sheet .rate { font-size: 14px; text-align: right; }
.sheet .pg { border-right: 1px dashed #999; }
.over td:nth-child(-n+18) { border-bottom-color: #222; }
.head td:nth-child(-n+6) { background: #daeef3; border-color: #222; text-align: center; font-weight: 700; color: #000; }
.item td:nth-child(-n+7) { border-color: #222; }
.item td:nth-child(2), .item td:nth-child(n+6) { text-align: right; }
.item td:nth-child(4) { text-align: center; border-right-color: #d8d8d8; }
.item td:nth-child(5) { font-size: 14px; }
.sheet .edge { border-right-color: #222; }
.sheet .sum { background: #daeef3; border-color: #222; text-align: center; font-weight: 700; color: #000; }
.sheet .amount { border-color: #222; text-align: right; }
.sheet .spill { overflow: visible; }

.vscroll { flex: 0 0 18px; display: flex; flex-direction: column; align-items: center; }
.split { width: 18px; height: 4px; background: #8a8a8a; }
.vthumb { width: 4px; height: 43%; margin-top: 18px; border-radius: 2px; background: #868686; }
.hscroll { display: flex; align-items: center; justify-content: space-between; flex: 0 0 17px; padding: 0 18px 0 17px; }
.hthumb { width: 46%; height: 4px; border-radius: 2px; background: #868686; }
.hsplit { width: 5px; height: 17px; background: linear-gradient(90deg, #9a9a9a 2px, #444 2px 3px, #9a9a9a 3px); }
.tabs { display: flex; flex: 0 0 20px; padding-left: 4px; }
.tabs button { flex: 0 0 18px; display: grid; place-items: center; }
.tabs svg { width: 12px; height: 12px; fill: #a8a8a8; stroke: #a8a8a8; }
.tabs .add { flex-basis: 29px; }
.tabs .add svg { width: 14px; height: 14px; stroke: #000; stroke-width: 4; }
.tabs .tab { flex: 0 0 auto; padding: 0 12px; background: linear-gradient(#bbb, #bbb) right center / 1px 12px no-repeat; }
.tabs .active { background: #fff; border-bottom: 2px solid #7a7a7a; font-weight: 600; }

.sidebar { position: relative; display: flex; flex-direction: column; align-items: center; gap: 1px; border-left: 1px solid #b4b4b4; padding-left: 6px; }
.sidebar button { flex: 0 0 30px; display: grid; place-items: center; }
.sidebar button:first-child { flex-basis: 22px; }
.sidebar svg { width: 24px; height: 24px; }
.sidebar .fx { font-size: 24px; line-height: 30px; }
.grip { position: absolute; left: -1px; top: 47%; width: 5px; height: 49px; background: #757575; }
.grip::before { content: ""; position: absolute; left: 1px; top: 21px; border: 3px solid transparent; border-left-color: #ddd; border-right: 0; }

/* status bar */
.status {
  display: grid;
  grid-template-columns: 27px 101px 148px 139px 120px 65px 43px 27px 27px 120px minmax(0, 1fr) 40px;
  flex: 0 0 19px;
  border-top: 1px solid #c0c0c0;
  font-size: 11px;
  line-height: 18px;
  white-space: nowrap;
}
.status > span { padding-left: 8px; background: linear-gradient(#ccc, #ccc) right center / 1px 16px no-repeat; }
.status .st-save { padding: 1px 0 0 7px; }
.st-save svg { width: 16px; height: 16px; stroke: #8a8a8a; }
.status .lang { padding-left: 24px; }
.status .mode { padding: 1px 0 0 8px; }
.mode svg { width: 32px; height: 16px; }
.status .calc { padding-left: 25px; }
.status .zoom { display: flex; align-items: center; gap: 3px; padding: 0 3px 0 4px; }
.zoom button { flex: 0 0 10px; }
.zoom svg { width: 10px; height: 10px; stroke: #333; stroke-width: 2; }
.zoom input { appearance: none; flex: 1; min-width: 0; margin: 0; height: 16px; background: linear-gradient(#888, #888) center / 100% 1px no-repeat; }
.zoom input::-webkit-slider-thumb { appearance: none; width: 4px; height: 11px; background: #ddd; border: 1px solid #444; }
.status .pct { background: none; padding-left: 5px; }
```
